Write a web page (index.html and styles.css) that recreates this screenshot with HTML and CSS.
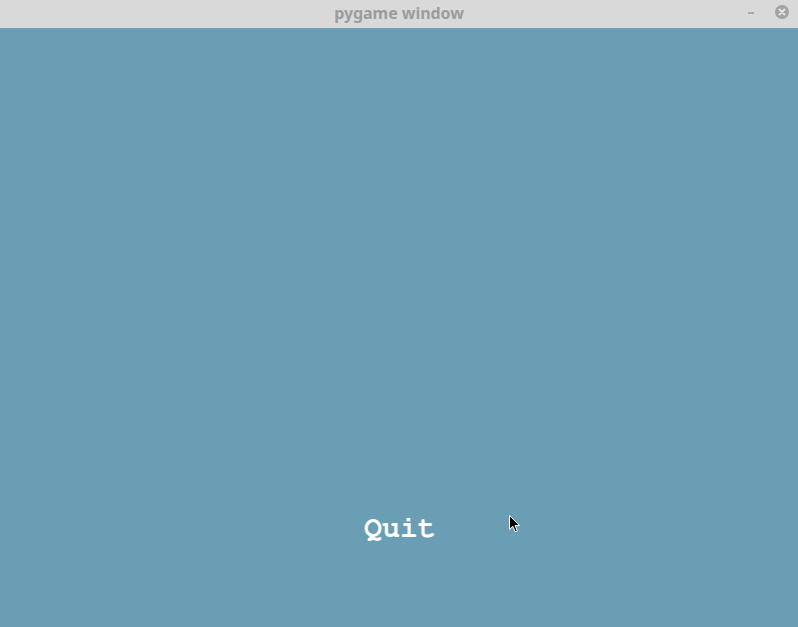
FILE: index.html
```html
<!DOCTYPE html>
<html>
<head>
<meta charset="utf-8">
<link rel="stylesheet" href="styles.css">
</head>
<body>
<div class="window">
  <div class="titlebar">
    <span class="title">pygame window</span>
    <div class="controls">
      <span class="min"></span>
      <svg class="close" width="14" height="14" viewBox="0 0 14 14">
        <circle cx="7" cy="7" r="7" fill="#a3a3a3"/>
        <path d="M4.5 4.5 L9.5 9.5 M9.5 4.5 L4.5 9.5" stroke="#e4e4e4" stroke-width="2" stroke-linecap="round"/>
      </svg>
    </div>
  </div>
  <div class="canvas">
    <div class="quit">Quit</div>
    <svg class="cursor" width="12" height="19" viewBox="0 0 12 19">
      <path d="M0.5 0.5 L0.5 14.5 L3.8 11.3 L6.2 16.8 L8.3 15.9 L6 10.6 L10.5 10.6 Z" fill="#000" stroke="#fff" stroke-width="1"/>
    </svg>
  </div>
</div>
</body>
</html>
```
FILE: styles.css
```css
html, body {
  margin: 0;
  padding: 0;
  width: 798px;
  height: 627px;
  overflow: hidden;
}
.window {
  display: flex;
  flex-direction: column;
  width: 798px;
  height: 627px;
}
.titlebar {
  height: 27px;
  flex: none;
  background: #d9d9d9;
  position: relative;
  display: flex;
  align-items: center;
  justify-content: center;
  border-bottom: 1px solid #dcdcdc;
}
.title {
  font-family: "Noto Sans", "Open Sans", sans-serif;
  font-weight: 700;
  font-size: 16px;
  color: #9c9c9c;
  letter-spacing: -0.05px;
  margin-top: -1px;
}
.controls {
  position: absolute;
  right: 9px;
  top: 5px;
  display: flex;
  align-items: center;
  gap: 21px;
}
.min {
  width: 6px;
  height: 2px;
  background: #a8a8a8;
  margin-top: 1px;
}
.close {
  display: block;
}
.canvas {
  flex: 1;
  background: #6a9eb5;
  position: relative;
}
.quit {
  position: absolute;
  left: 364px;
  top: 483px;
  font-family: "Nimbus Mono PS", "Nimbus Mono L", "FreeMono", "Courier", "Liberation Mono", monospace;
  font-weight: 700;
  font-size: 30px;
  color: #ffffff;
  line-height: 34px;
}
.cursor {
  position: absolute;
  left: 509px;
  top: 487px;
}
```
